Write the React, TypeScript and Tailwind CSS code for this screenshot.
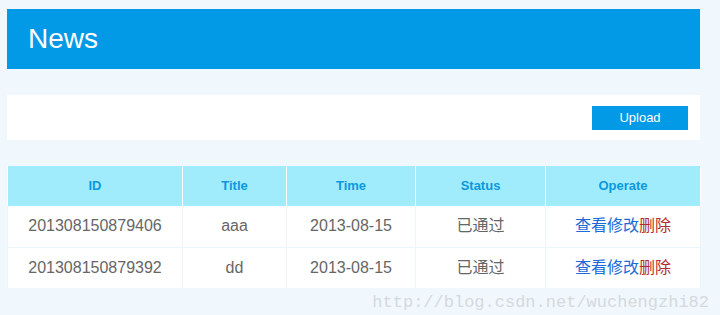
const rows = [
  { id: "201308150879406", title: "aaa", time: "2013-08-15", status: "已通过" },
  { id: "201308150879392", title: "dd", time: "2013-08-15", status: "已通过" },
];

const cols = [
  { label: "ID", w: "w-[175px]" },
  { label: "Title", w: "w-[104px]" },
  { label: "Time", w: "w-[129px]" },
  { label: "Status", w: "w-[130px]" },
  { label: "Operate", w: "w-[155px]" },
];

export default function App() {
  return (
    <div className="relative min-h-[315px] bg-[#f0f8fe] pl-[7px] pt-[9px] pr-[20px] font-['Liberation_Sans','Noto_Sans_CJK_SC',sans-serif]">
      <div className="flex h-[60px] items-center bg-[#0299e6] pl-[21px]">
        <h1 className="text-[28px] leading-none text-white">News</h1>
      </div>

      <div className="mt-[26px] flex h-[45px] items-center justify-end bg-white pr-[12px]">
        <button className="h-[24px] w-[96px] bg-[#0299e6] text-[13px] text-white">Upload</button>
      </div>

      <table className="mt-[26px] w-[693px] table-fixed border-collapse">
        <thead>
          <tr className="h-[40px] bg-[#a0ecfd]">
            {cols.map((c) => (
              <th
                key={c.label}
                className={`${c.w} border-x border-white text-[13px] font-bold text-[#0b98e0]`}
              >
                {c.label}
              </th>
            ))}
          </tr>
        </thead>
        <tbody>
          {rows.map((r) => (
            <tr key={r.id} className="h-[41px] border-b border-[#eaf6fb] bg-white text-[16px] text-[#666666] last:border-b-0">
              <td className="border-x border-[#eaf6fb] text-center">{r.id}</td>
              <td className="border-x border-[#eaf6fb] text-center">{r.title}</td>
              <td className="border-x border-[#eaf6fb] text-center">{r.time}</td>
              <td className="border-x border-[#eaf6fb] text-center">{r.status}</td>
              <td className="border-x border-[#eaf6fb] text-center">
                <a className="text-[#1a6ad8]">查看</a>
                <a className="text-[#1a6ad8]">修改</a>
                <a className="text-[#b22b2b]">删除</a>
              </td>
            </tr>
          ))}
        </tbody>
      </table>

      <div className="absolute bottom-[4px] right-[11px] font-['Liberation_Mono',monospace] text-[17px] leading-none text-[#d5d9dc]">
        http://blog.csdn.net/wuchengzhi82
      </div>
    </div>
  );
}
